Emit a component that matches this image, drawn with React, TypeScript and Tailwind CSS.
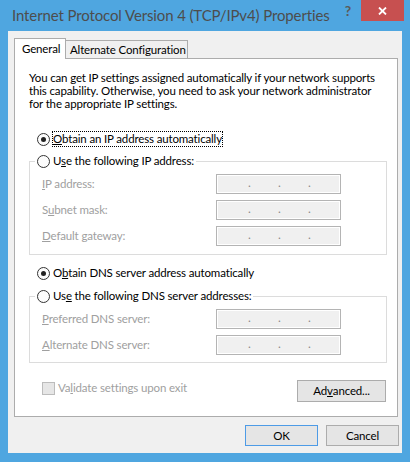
import React from 'react';

const Radio: React.FC<{ checked?: boolean }> = ({ checked }) => (
  <span className="flex h-[13px] w-[13px] shrink-0 items-center justify-center rounded-full border border-[#333333] bg-[#fcfcfc]">
    {checked && <span className="h-[5px] w-[5px] rounded-full bg-[#222222]" />}
  </span>
);

const IpBox: React.FC = () => (
  <div className="h-[20px] w-[125px] border border-[#b4b4b4] bg-[#f0f0f0] shadow-[inset_0_0_0_1px_#ffffff]">
    <div className="flex gap-[27px] pl-[31px] pt-[1px] text-[12px] leading-[14px] text-[#8a8a8a]">
      <span className="w-[3px]">.</span>
      <span className="w-[3px]">.</span>
      <span className="w-[3px]">.</span>
    </div>
  </div>
);

const Field: React.FC<{ label: React.ReactNode }> = ({ label }) => (
  <div className="flex items-center">
    <span className="w-[174px] text-[#a0a0a0]">{label}</span>
    <IpBox />
  </div>
);

const App: React.FC = () => {
  return (
    <div className="flex h-[462px] w-[410px] flex-col bg-[#4fa6e0] font-['Lato',sans-serif] text-[11.5px] leading-[14px] tracking-[-0.15px] text-black">
      {/* Title bar */}
      <div className="flex h-[31px] shrink-0 items-start">
        <div className="whitespace-nowrap pl-[12px] pt-[5px] text-[15px] leading-[20px] tracking-[-0.12px] text-[#4d4d4d]">
          Internet Protocol Version 4 (TCP/IPv4) Properties
        </div>
        <div className="flex-1" />
        <span className="mr-[10px] pt-[2px] text-[14px] font-bold leading-[18px] text-[#5a5a5a]">?</span>
        <div className="mr-[6px] flex h-[21px] w-[43px] shrink-0 items-center justify-center bg-[#c75050]">
          <svg width="9" height="8" viewBox="0 0 9 8">
            <path d="M1 0.5 L8 7.5 M8 0.5 L1 7.5" stroke="#ffffff" strokeWidth="1.8" />
          </svg>
        </div>
      </div>

      {/* Client area */}
      <div className="mx-[8px] mb-[9px] flex flex-1 flex-col bg-[#f0f0f0] pl-[6px] pr-[3px] pt-[7px]">
        {/* Tabs */}
        <div className="flex h-[20px] items-end whitespace-nowrap">
          <div className="relative z-10 -mb-px flex h-[21px] w-[52px] items-center border border-b-0 border-[#acacac] bg-white pl-[7px]">
            General
          </div>
          <div className="flex h-[18px] w-[122px] items-center border border-b-0 border-l-0 border-[#acacac] bg-[#f0f0f0] pl-[4px]">
            Alternate Configuration
          </div>
        </div>

        {/* Panel */}
        <div className="flex h-[359px] w-[384px] flex-col whitespace-nowrap border border-[#acacac] bg-white pl-[14px] pr-[10px]">
          <p className="mt-[12px] leading-[13px]">
            You can get IP settings assigned automatically if your network supports
            <br />
            this capability. Otherwise, you need to ask your network administrator
            <br />
            for the appropriate IP settings.
          </p>

          <div className="mt-[22px] flex items-center pl-[8px]">
            <Radio checked />
            <span className="ml-[3px] outline outline-1 outline-dotted outline-black">
              <u>O</u>btain an IP address automatically
            </span>
          </div>

          <fieldset className="mt-[8px] border border-[#dcdcdc] pb-[8px]">
            <legend className="ml-[5px] flex items-center px-[2px]">
              <Radio />
              <span className="ml-[3px]">
                U<u>s</u>e the following IP address:
              </span>
            </legend>
            <div className="flex flex-col gap-[6px] pl-[12px] pt-[6px]">
              <Field label={<><u>I</u>P address:</>} />
              <Field label={<>S<u>u</u>bnet mask:</>} />
              <Field label={<><u>D</u>efault gateway:</>} />
            </div>
          </fieldset>

          <div className="mt-[11px] flex items-center pl-[8px]">
            <Radio checked />
            <span className="ml-[3px]">
              O<u>b</u>tain DNS server address automatically
            </span>
          </div>

          <fieldset className="mt-[9px] border border-[#dcdcdc] pb-[7px]">
            <legend className="ml-[5px] flex items-center px-[2px]">
              <Radio />
              <span className="ml-[3px]">
                Us<u>e</u> the following DNS server addresses:
              </span>
            </legend>
            <div className="flex flex-col gap-[6px] pl-[12px] pt-[6px]">
              <Field label={<><u>P</u>referred DNS server:</>} />
              <Field label={<><u>A</u>lternate DNS server:</>} />
            </div>
          </fieldset>

          <div className="mt-[17px] flex items-start justify-between pl-[13px] pr-[1px]">
            <div className="flex items-center pt-[1px]">
              <span className="h-[13px] w-[13px] border border-[#bcbcbc] bg-[#e6e6e6]" />
              <span className="ml-[3px] text-[#a0a0a0]">
                Va<u>l</u>idate settings upon exit
              </span>
            </div>
            <button className="flex h-[22px] w-[89px] items-center justify-center border border-[#acacac] bg-[#e5e5e5]">
              Ad<u>v</u>anced...
            </button>
          </div>
        </div>

        {/* Dialog buttons */}
        <div className="mt-[8px] flex justify-end gap-[8px]">
          <button className="flex h-[21px] w-[73px] items-center justify-center border border-[#4d9be6] bg-[#e5e5e5]">
            OK
          </button>
          <button className="flex h-[21px] w-[73px] items-center justify-center border border-[#acacac] bg-[#e5e5e5]">
            Cancel
          </button>
        </div>
      </div>
    </div>
  );
};

export default App;
